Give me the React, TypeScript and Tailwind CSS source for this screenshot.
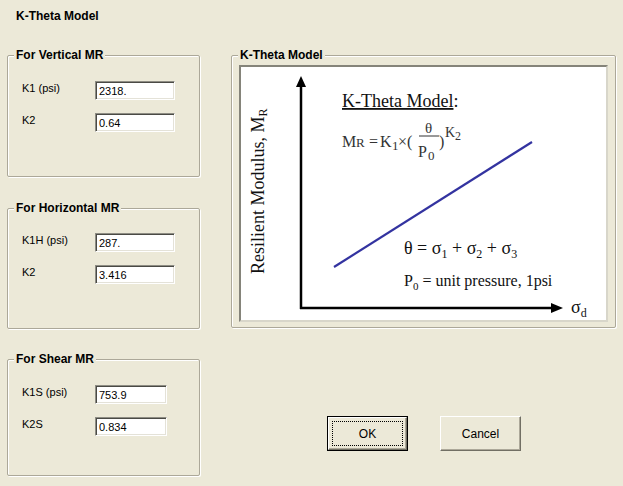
import React from "react";

interface Field {
	label: string;
	value: string;
}

interface Group {
	title: string;
	height: string;
	top: string;
	pad: string;
	inputWidth: string;
	fields: Field[];
}

const groups: Group[] = [
	{
		title: "For Vertical MR",
		height: "h-[129px]",
		top: "mt-0",
		pad: "pt-[19px]",
		inputWidth: "w-[80px]",
		fields: [
			{ label: "K1 (psi)", value: "2318." },
			{ label: "K2", value: "0.64" },
		],
	},
	{
		title: "For Horizontal MR",
		height: "h-[128px]",
		top: "mt-[24px]",
		pad: "pt-[18px]",
		inputWidth: "w-[80px]",
		fields: [
			{ label: "K1H (psi)", value: "287." },
			{ label: "K2", value: "3.416" },
		],
	},
	{
		title: "For Shear MR",
		height: "h-[124px]",
		top: "mt-[23px]",
		pad: "pt-[19px]",
		inputWidth: "w-[72px]",
		fields: [
			{ label: "K1S (psi)", value: "753.9" },
			{ label: "K2S", value: "0.834" },
		],
	},
];

function GroupBox({ title, className, children }: { title: string; className?: string; children: React.ReactNode }) {
	return (
		<fieldset
			className={`block border border-[#aca899] rounded-[2px] shadow-[1px_1px_0_#ffffff,inset_1px_1px_0_#ffffff] ${className ?? ""}`}>
			<legend className="ml-[6px] px-[2px] bg-[#ECE9D8] font-bold text-[12px] leading-[14px]">{title}</legend>
			{children}
		</fieldset>
	);
}

function TextBox({ value, width }: { value: string; width: string }) {
	return (
		<div
			className={`${width} h-[19px] bg-white border border-t-[#8e8d84] border-l-[#8e8d84] border-b-white border-r-white shadow-[inset_1px_1px_0_#4a4a45,inset_-1px_-1px_0_#e4e2d8] pl-[3px] pt-[3px] text-[11px] leading-[12px]`}>
			{value}
		</div>
	);
}

function Chart() {
	const serif = "'Liberation Serif', 'Times New Roman', serif";
	return (
		<svg
			width="364"
			height="252"
			viewBox="241 67 364 252"
			style={{ fontFamily: serif }}
			className="block overflow-visible">
			{/* axes */}
			<line x1="301" y1="85" x2="301" y2="309" stroke="#000" strokeWidth="2.5" />
			<polygon points="301,76 296,87 306,87" fill="#000" />
			<line x1="300" y1="308" x2="553" y2="308" stroke="#000" strokeWidth="2.5" />
			<polygon points="563,308 551,303 551,313" fill="#000" />

			{/* model line */}
			<line x1="334" y1="267" x2="532" y2="142" stroke="#3333a0" strokeWidth="2.2" />

			{/* y label */}
			<text transform="translate(264 274) rotate(-90)" fontSize="18" fill="#111">
				Resilient Modulus, M
				<tspan fontSize="12" dy="3">R</tspan>
			</text>

			{/* x label */}
			<text x="571" y="313" fontSize="18" fill="#111">
				σ<tspan fontSize="12" dy="4">d</tspan>
			</text>

			{/* heading */}
			<text x="342" y="107" fontSize="18" fill="#111">
				<tspan textDecoration="underline">K-Theta Model</tspan>:
			</text>

			{/* formula */}
			<g fill="#333">
				<text x="342" y="147" fontSize="16">M</text>
				<text x="356" y="147" fontSize="13">R</text>
				<text x="369" y="147" fontSize="16">=</text>
				<text x="380" y="147" fontSize="16">K</text>
				<text x="392" y="150" fontSize="13">1</text>
				<text x="398" y="147" fontSize="16">×</text>
				<text x="407" y="147" fontSize="16">(</text>
				<text x="425" y="133" fontSize="15">θ</text>
				<line x1="419" y1="136" x2="439" y2="136" stroke="#333" strokeWidth="1" />
				<text x="418" y="157" fontSize="16">P</text>
				<text x="428" y="160" fontSize="13">0</text>
				<text x="439" y="147" fontSize="16">)</text>
				<text x="445" y="137" fontSize="14">K</text>
				<text x="455" y="140" fontSize="12">2</text>
			</g>

			{/* definitions */}
			<text x="404" y="254" fontSize="18" fill="#111">
				θ = σ<tspan fontSize="12" dy="4">1</tspan>
				<tspan dy="-4"> + σ</tspan>
				<tspan fontSize="12" dy="4">2</tspan>
				<tspan dy="-4"> + σ</tspan>
				<tspan fontSize="12" dy="4">3</tspan>
			</text>
			<text x="404" y="286" fontSize="16" fill="#111">
				P<tspan fontSize="11" dy="4">0</tspan>
				<tspan dy="-4"> = unit pressure, 1psi</tspan>
			</text>
		</svg>
	);
}

export default function App() {
	return (
		<div className="w-[623px] h-[486px] bg-[#ECE9D8] text-black font-['Liberation_Sans',Arial,sans-serif] text-[11px] overflow-hidden">
			<div className="h-[48px] pl-[16px] pt-[9px] font-bold text-[12px] leading-[14px]">K-Theta Model</div>

			<div className="flex pl-[7px]">
				{/* left column */}
				<div className="w-[193px] flex flex-col">
					{groups.map((g) => (
						<GroupBox
							key={g.title}
							title={g.title}
							className={`${g.height} ${g.top}`}>
							<div className={`${g.pad} pl-[14px] flex flex-col gap-[13px]`}>
								{g.fields.map((f) => (
									<div
										key={f.label}
										className="flex h-[19px]">
										<div className="w-[73px] pt-[1px] leading-[13px]">{f.label}</div>
										<TextBox
											value={f.value}
											width={g.inputWidth}
										/>
									</div>
								))}
							</div>
						</GroupBox>
					))}
				</div>

				{/* right column */}
				<div className="ml-[31px] w-[385px] flex flex-col">
					<GroupBox
						title="K-Theta Model"
						className="h-[280px]">
						<div className="pt-[3px] pl-[7px]">
							<div className="w-[369px] h-[257px] bg-white border-2 border-t-[#85847a] border-l-[#85847a] border-b-[#d8d6ca] border-r-[#d8d6ca]">
								<Chart />
							</div>
						</div>
					</GroupBox>

					<div className="mt-[88px] pl-[96px] flex gap-[32px]">
						<button className="w-[81px] h-[35px] border border-black bg-[#ECE9D8] p-0">
							<div className="h-full border border-t-white border-l-white border-b-[#716f64] border-r-[#716f64] shadow-[inset_-1px_-1px_0_#aca899] p-[3px]">
								<div className="h-full border border-dotted border-black flex items-center justify-center text-[12px]">
									OK
								</div>
							</div>
						</button>
						<button className="w-[81px] h-[35px] border border-t-white border-l-white border-b-[#716f64] border-r-[#716f64] shadow-[inset_-1px_-1px_0_#aca899] bg-[#ECE9D8] flex items-center justify-center text-[12px]">
							Cancel
						</button>
					</div>
				</div>
			</div>
		</div>
	);
}
